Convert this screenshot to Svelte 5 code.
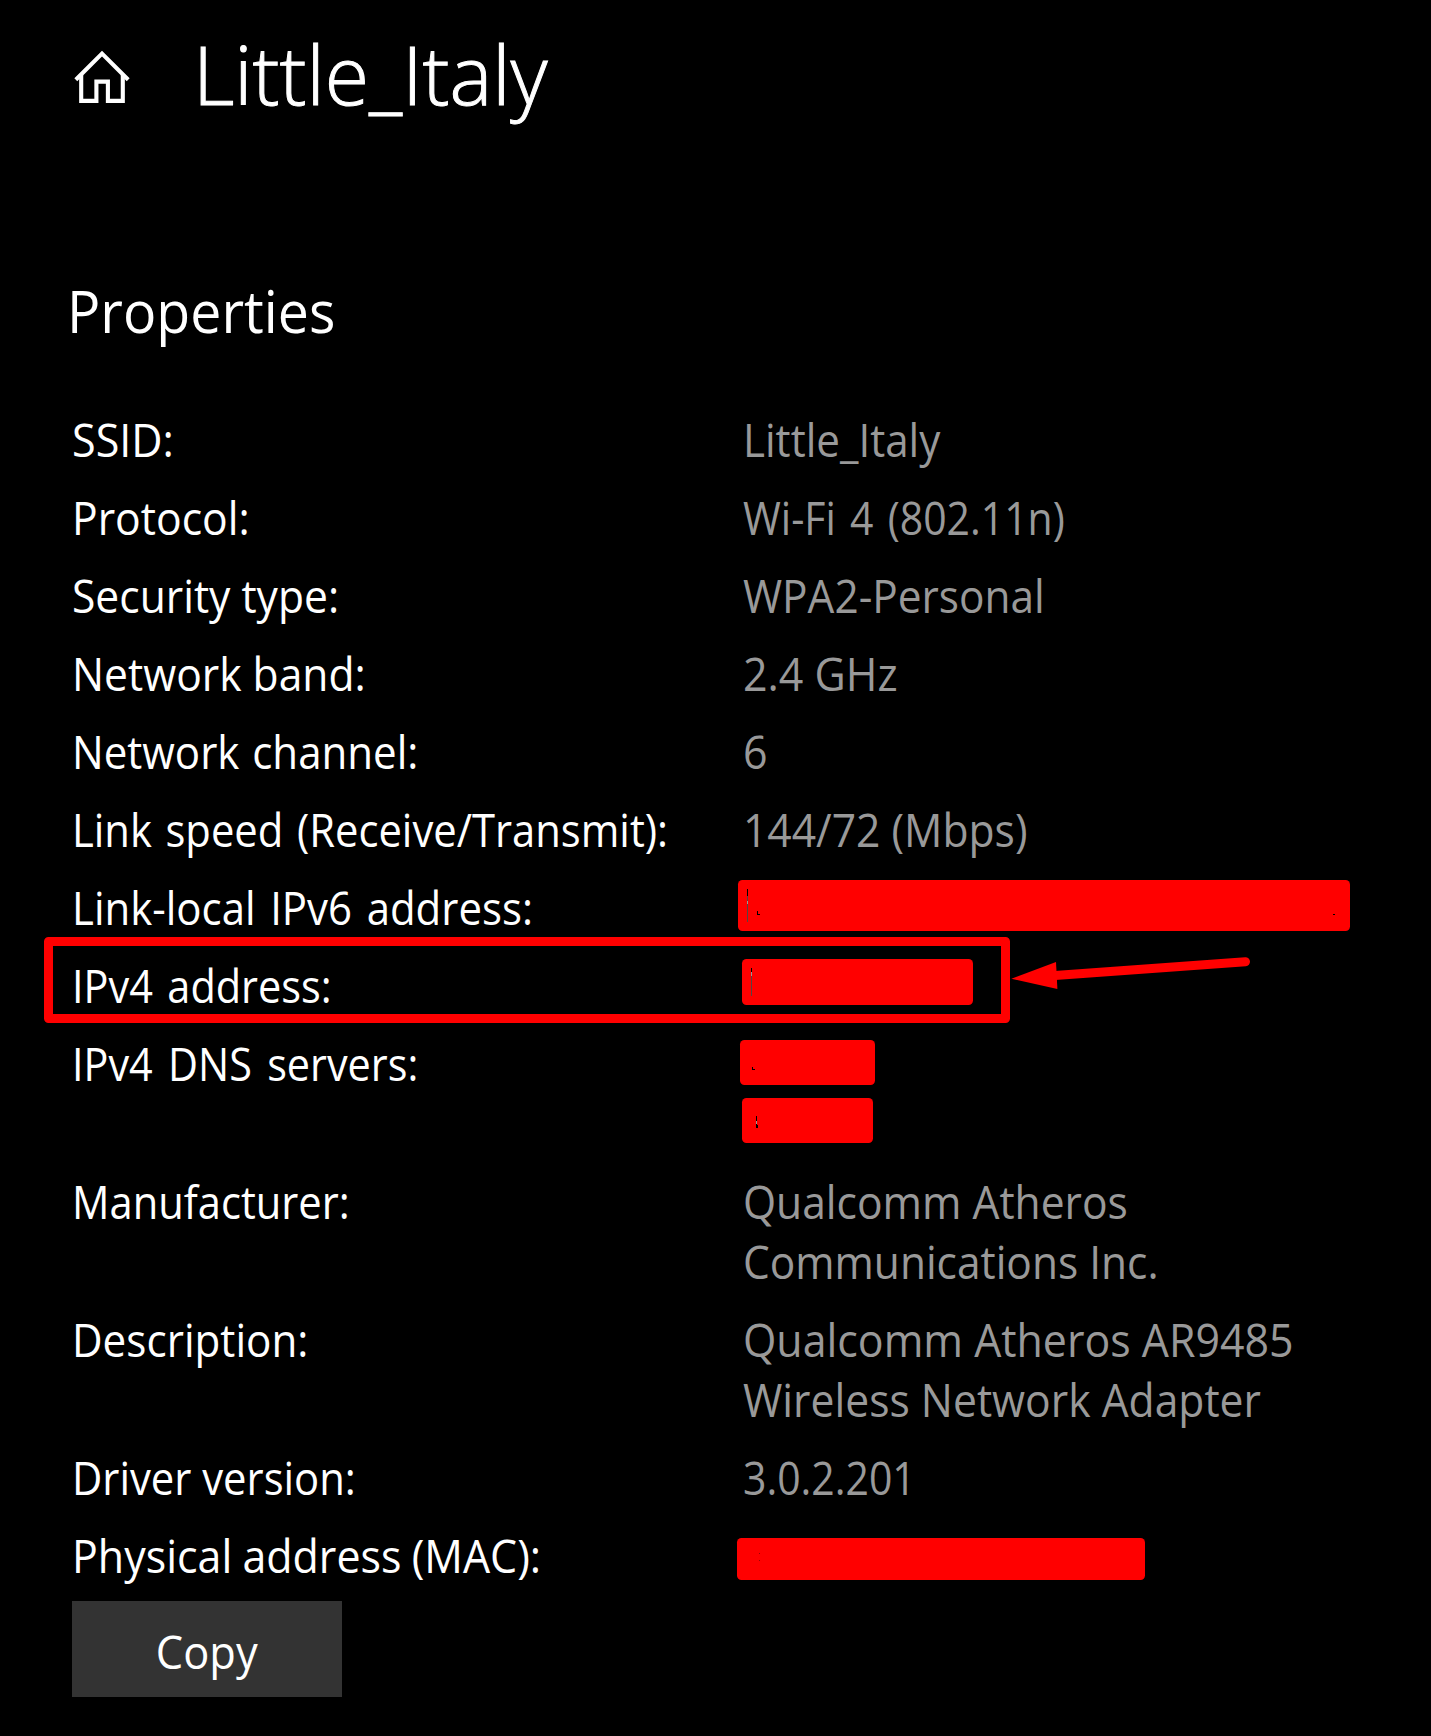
<script>
  // Each text: content, ink width in pixels, optional extra word spacing.
  const rows = [
    { label: ['SSID:', 97.3], values: [['Little_Italy', 194]] },
    { label: ['Protocol:', 171.3], values: [['Wi-Fi 4 (802.11n)', 320.6, 4]] },
    { label: ['Security type:', 262.5], values: [['WPA2-Personal', 298.6]] },
    { label: ['Network band:', 287.2], values: [['2.4 GHz', 151.7]] },
    { label: ['Network channel:', 340, 2], values: [['6', 21]] },
    { label: ['Link speed (Receive/Transmit):', 589.7, 3], values: [['144/72 (Mbps)', 279.5]] },
    { label: ['Link-local IPv6 address:', 454.6, 4], values: [] },
    { label: ['IPv4 address:', 253.4, 4], values: [] },
    { label: ['IPv4 DNS servers:', 340, 5], values: [], tall: true },
    {
      label: ['Manufacturer:', 271.4],
      values: [['Qualcomm Atheros', 381.6], ['Communications Inc.', 411]]
    },
    {
      label: ['Description:', 230],
      values: [['Qualcomm Atheros AR9485', 546.9], ['Wireless Network Adapter', 517.6]]
    },
    { label: ['Driver version:', 277.5], values: [['3.0.2.201', 162.1]] },
    { label: ['Physical address (MAC):', 462.6, -1], values: [] }
  ];

  // Scales a text horizontally so that its ink spans the given width.
  function fit(node, [, width, spacing = 0]) {
    const style = getComputedStyle(node);
    const ctx = document.createElement('canvas').getContext('2d');
    ctx.font = `${style.fontWeight} ${style.fontSize} ${style.fontFamily}`;
    const text = node.textContent;
    const m = ctx.measureText(text);
    const gaps = text.split(' ').length - 1;
    const ink = m.actualBoundingBoxLeft + m.actualBoundingBoxRight + gaps * spacing;
    node.style.wordSpacing = `${spacing}px`;
    node.style.transform = `scaleX(${width / ink})`;
  }

  const title = ['Little_Italy', 347];
  const heading = ['Properties', 261.7];
  const copy = ['Copy', 100.3];
</script>

<main class="page">
  <header class="header">
    <svg class="home" viewBox="0 0 56 54" aria-hidden="true">
      <path d="M1.8 29.8 28 3.6 54.2 29.8" />
      <path d="M7.2 25V50.9H22.4V31.6H33.9V50.9H48.8V25" />
    </svg>
    <h1><span class="fit" use:fit={title}>{title[0]}</span></h1>
  </header>

  <h2><span class="fit" use:fit={heading}>{heading[0]}</span></h2>

  <dl class="list">
    {#each rows as row}
      <div class="row" class:tall={row.tall}>
        <dt><span class="fit" use:fit={row.label}>{row.label[0]}</span></dt>
        <dd>
          {#each row.values as value}
            <span class="fit line" use:fit={value}>{value[0]}</span>
          {/each}
        </dd>
      </div>
    {/each}
  </dl>

  <button class="copy" type="button"><span class="fit center" use:fit={copy}>{copy[0]}</span></button>

  <!-- Redaction bars, highlight frame and arrow -->
  <svg class="marks" width="1431" height="1736" viewBox="0 0 1431 1736" aria-hidden="true">
    <g fill="#f00">
      <rect x="738" y="880" width="612" height="51" rx="4.5" />
      <rect x="742" y="959" width="231" height="46" rx="4.5" />
      <rect x="740" y="1040" width="135" height="45" rx="4.5" />
      <rect x="742" y="1098" width="131" height="45" rx="4.5" />
      <rect x="737" y="1538" width="408" height="42" rx="4.5" />
      <path d="M1011.4 978.7 1056 962 1057.4 989Z" />
    </g>
    <rect x="48.5" y="941.5" width="957" height="77" fill="none" stroke="#f00" stroke-width="9" stroke-linejoin="round" />
    <path d="M1055 975.6 1245.5 961.7" stroke="#f00" stroke-width="9" stroke-linecap="round" />
    <!-- Slivers of the covered text that show through the bars -->
    <g fill="#000">
      <rect x="747" y="889" width="1" height="7" />
      <path d="M757 911h1v3h2v1h-3z" />
      <rect x="1333" y="914" width="2" height="1" />
      <rect x="751" y="968" width="1" height="4" />
      <path d="M752 1067h1v2h2v1h-3z" />
      <path d="M756 1116h1v9h1v3h-2z" />
    </g>
    <g fill="#544">
      <rect x="747" y="896" width="1" height="26" />
      <rect x="751" y="976" width="1" height="20" />
    </g>
    <g fill="#900">
      <rect x="759" y="1553" width="1" height="1" />
      <rect x="759" y="1560" width="1" height="1" />
    </g>
    <g fill="#999">
      <rect x="747" y="901" width="1" height="3" />
      <rect x="751" y="972" width="1" height="4" />
      <rect x="756" y="1121" width="1" height="3" />
    </g>
  </svg>
</main>

<style>
  :global(body) {
    margin: 0;
    background: #000;
  }
  .page {
    position: relative;
    box-sizing: border-box;
    width: 1431px;
    height: 1736px;
    padding: 26px 0 0 72px;
    overflow: hidden;
    background: #000;
    color: #fff;
    font-family: 'Open Sans', sans-serif;
    font-size: 45px;
    line-height: 60px;
  }
  .header {
    display: flex;
    align-items: flex-start;
    height: 110px;
  }
  .home {
    flex: none;
    width: 56px;
    height: 54px;
    margin: 24px 63px 0 2px;
    overflow: visible;
    fill: none;
    stroke: #fff;
    stroke-width: 4.1;
  }
  h1,
  h2,
  dl,
  dd {
    margin: 0;
  }
  h1 {
    font-size: 82px;
    font-weight: 300;
    line-height: 94px;
    -webkit-text-stroke: 1px #fff;
  }
  h2 {
    margin: 136px 0 0 -5px;
    font-size: 59px;
    font-weight: 400;
    line-height: 76px;
  }
  .fit {
    display: inline-block;
    transform-origin: left center;
    white-space: nowrap;
  }
  .center {
    transform-origin: center;
  }
  .list {
    display: flex;
    flex-direction: column;
    gap: 18px;
    margin-top: 62px;
  }
  .row {
    display: grid;
    grid-template-columns: 670.5px 1fr;
    min-height: 60px;
  }
  .tall {
    min-height: 120px;
  }
  dd {
    display: flex;
    flex-direction: column;
    align-items: flex-start;
    color: #999;
  }
  .line {
    display: block;
  }
  .copy {
    display: flex;
    align-items: center;
    justify-content: center;
    width: 270px;
    height: 96px;
    margin-top: 15px;
    padding: 6px 0 0;
    border: 0;
    background: #333;
    color: #fff;
    font: inherit;
  }
  .marks {
    position: absolute;
    top: 0;
    left: 0;
  }
</style>
